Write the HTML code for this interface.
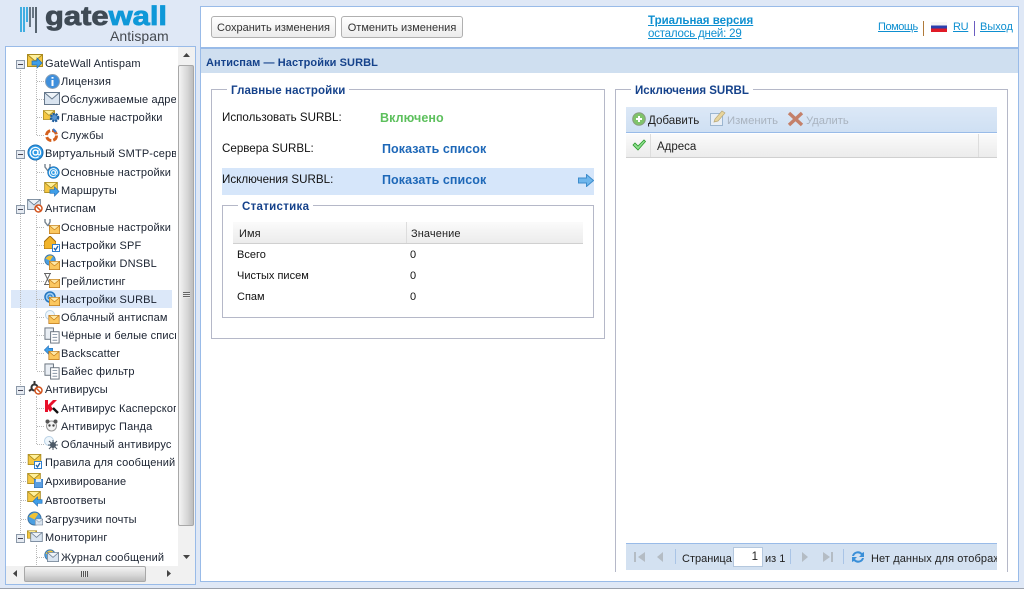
<!DOCTYPE html>
<html lang="ru"><head><meta charset="utf-8"><title>GateWall Antispam</title>
<style>
html,body{margin:0;padding:0}
body{width:1024px;height:589px;overflow:hidden;background:#dfe8f6;position:relative;font-family:"Liberation Sans",sans-serif;font-size:11px;color:#111}
div,span,a,svg{position:absolute;white-space:nowrap}
a{color:#0e8fd0;text-decoration:underline}
.t{line-height:14px;font-size:11px;letter-spacing:.15px;color:#1a2230}
.b{font-weight:bold}
.fs{border:1px solid #b5b8c8;box-sizing:border-box}
.lg{font-weight:bold;color:#15428b;background:#fff;padding:0 4px;font-size:11.5px;line-height:14px}
.btn{top:16px;height:22px;box-sizing:border-box;border:1px solid #b0b0b0;border-radius:3px;background:linear-gradient(#fff,#ececec);text-align:center;line-height:22px;font-size:11px;color:#333}
.h{background:linear-gradient(#fbfbfb,#f3f3f3 50%,#ececec);border-bottom:1px solid #d0d0d0;box-sizing:border-box}
.sep{width:1px;background:#a9c4e6}
</style></head><body>
<svg width="0" height="0" style="left:0;top:0"><defs>
<symbol id="env" viewBox="0 0 16 13"><rect x=".5" y=".5" width="15" height="12" fill="#fbc75f" stroke="#b9761a"/><path d="M1 1l7 6 7-6" fill="#ffe9a8" stroke="#c27a16"/></symbol>
<symbol id="gen" viewBox="0 0 16 13"><rect x=".5" y=".5" width="15" height="12" fill="#f5c742" stroke="#a88a20"/><path d="M1 1l7 6 7-6" fill="#fff09a" stroke="#a88a20"/></symbol>
<symbol id="genv" viewBox="0 0 16 13"><rect x=".5" y=".5" width="15" height="12" fill="#d9e4f0" stroke="#66788c"/><path d="M1 1l7 6 7-6" fill="#eef3f8" stroke="#66788c"/></symbol>
<symbol id="doc" viewBox="0 0 18 18"><rect x="1" y="1" width="9" height="12" fill="#e9eef4" stroke="#66707c"/><rect x="7" y="5" width="9" height="12" fill="#fff" stroke="#66707c"/><path d="M9 8h5M9 11h5M9 14h5" stroke="#8895a5"/></symbol>
<symbol id="ar" viewBox="0 0 12 12"><path d="M1 4h5V1l5 5-5 5V8H1z" fill="#3f9ee8" stroke="#1f6db8" stroke-width=".7"/></symbol>
<symbol id="al" viewBox="0 0 12 12"><path d="M11 4H6V1L1 6l5 5V8h5z" fill="#3f9ee8" stroke="#1f6db8" stroke-width=".7"/></symbol>
<symbol id="at" viewBox="0 0 18 18"><circle cx="9" cy="9" r="8" fill="#2f9be6" stroke="#1568b0"/><circle cx="9" cy="9" r="2.600" fill="none" stroke="#fff" stroke-width="1.500"/><path d="M11.600 6.400v3.600q0 2 2 1.400q1-1 .7-3a5.500 5.500 0 1 0-2 5" fill="none" stroke="#fff" stroke-width="1.300"/></symbol>
<symbol id="minus" viewBox="0 0 9 9"><rect x=".5" y=".5" width="8" height="8" fill="#e6ebf2" stroke="#8b98a8"/><path d="M2 4.500h5" stroke="#445"/></symbol>
<symbol id="globe" viewBox="0 0 16 16"><circle cx="8" cy="8" r="7" fill="#4b9ee0" stroke="#3a6f9e"/><path d="M2 6q5-6 10-3L8 9z" fill="#f1c232"/></symbol>
</defs></svg>

<!-- logo -->
<svg style="left:19px;top:6px" width="20" height="30"><g stroke-width="1.600"><path d="M2 1v25M5 1v25M8 1v15" stroke="#1aa0dc"/><path d="M11 1v20M14 1v11" stroke="#4b5a68"/><path d="M17 1v26" stroke="#35424f"/></g></svg>
<div class="b" style="left:45px;top:1px;font-size:27px;line-height:30px;color:#3f4a55;-webkit-text-stroke:.8px currentColor;transform-origin:0 0;transform:scaleX(1.145)">gate<span style="position:static;color:#0f98d8">wall</span></div>
<div style="left:110px;top:27px;font-size:14px;line-height:18px;color:#44494f;letter-spacing:.05px">Antispam</div>

<!-- left panel -->
<div style="left:5px;top:46px;width:191px;height:539px;box-sizing:border-box;background:#fff;border:1px solid #99bbe8"></div>
<div style="left:11px;top:290px;width:161px;height:18px;background:#dce8f9"></div>
<div style="left:20px;top:67px;height:470px;border-left:1px dotted #b8b8b8"></div>
<div style="left:36px;top:70px;height:65px;border-left:1px dotted #b8b8b8"></div>
<div style="left:36px;top:160px;height:30px;border-left:1px dotted #b8b8b8"></div>
<div style="left:36px;top:215px;height:155px;border-left:1px dotted #b8b8b8"></div>
<div style="left:36px;top:396px;height:48px;border-left:1px dotted #b8b8b8"></div>
<div style="left:36px;top:545px;height:20px;border-left:1px dotted #b8b8b8"></div>
<svg style="left:0;top:0" width="60" height="589"><path fill="none" stroke="#b8b8b8" stroke-dasharray="1 1" d="M37 81.500h7M37 99.500h7M37 117.500h7M37 135.500h7M37 172.500h7M37 190.500h7M37 227.500h7M37 245.500h7M37 263.500h7M37 281.500h7M37 299.500h7M37 317.500h7M37 335.500h7M37 353.500h7M37 371.500h7M37 408.500h7M37 426.500h7M37 444.500h7M37 557.500h7M21 462.500h6M21 481.500h6M21 500.500h6M21 519.500h6"/></svg>

<svg style="left:16px;top:60px" width="9" height="9"><use href="#minus"/></svg>
<svg style="left:16px;top:150px" width="9" height="9"><use href="#minus"/></svg>
<svg style="left:16px;top:205px" width="9" height="9"><use href="#minus"/></svg>
<svg style="left:16px;top:386px" width="9" height="9"><use href="#minus"/></svg>
<svg style="left:16px;top:534px" width="9" height="9"><use href="#minus"/></svg>

<!-- tree icons -->
<svg style="left:27px;top:54px" width="16" height="13"><use href="#gen"/></svg><svg style="left:31px;top:57px" width="12" height="12"><use href="#ar"/></svg>
<svg style="left:45px;top:74px" width="15" height="15" viewBox="0 0 15 15"><circle cx="7.500" cy="7.500" r="7" fill="#3f8fdc" stroke="#87a0b8"/><path d="M7.500 3v1.600M7.500 6v6" stroke="#fff" stroke-width="2"/></svg>
<svg style="left:44px;top:92px" width="16" height="13"><use href="#genv"/></svg>
<svg style="left:43px;top:110px" width="12" height="10"><use href="#gen"/></svg><svg style="left:49px;top:112px" width="11" height="11" viewBox="0 0 11 11"><circle cx="5.500" cy="5.500" r="3.600" fill="#5a98d4" stroke="#1f5c9c" stroke-width="2.400" stroke-dasharray="2 1"/></svg>
<svg style="left:44px;top:128px" width="15" height="15" viewBox="0 0 15 15"><circle cx="7.500" cy="7.500" r="5" fill="none" stroke="#d4601e" stroke-width="3" stroke-dasharray="6 2"/><path d="M9 1l3 3" stroke="#3a78c8" stroke-width="2"/></svg>
<svg style="left:27px;top:144px" width="17" height="17"><use href="#at"/></svg>
<svg style="left:44px;top:164px" width="8" height="10" viewBox="0 0 8 10"><path d="M1 0v3l3 4M6 0v3L4 7" stroke="#76838f" stroke-width="1.400" fill="none"/></svg><svg style="left:47px;top:166px" width="13" height="13"><use href="#at"/></svg>
<svg style="left:44px;top:182px" width="14" height="11"><use href="#gen"/></svg><svg style="left:49px;top:186px" width="11" height="11"><use href="#ar"/></svg>
<svg style="left:27px;top:199px" width="14" height="11"><use href="#genv"/></svg><svg style="left:34px;top:204px" width="9" height="9" viewBox="0 0 9 9"><circle cx="4.500" cy="4.500" r="3.500" fill="#fff" stroke="#d2531c" stroke-width="1.500"/><path d="M2 2l5 5" stroke="#d2531c" stroke-width="1.500"/></svg>
<svg style="left:44px;top:219px" width="8" height="10" viewBox="0 0 8 10"><path d="M1 0v3l3 4M6 0v3L4 7" stroke="#76838f" stroke-width="1.400" fill="none"/></svg><svg style="left:49px;top:225px" width="11" height="9"><use href="#env"/></svg>
<svg style="left:44px;top:236px" width="12" height="13" viewBox="0 0 12 13"><path d="M0 6l6-6 6 6v7H0z" fill="#f2b42a" stroke="#a06c10"/></svg><svg style="left:52px;top:244px" width="8" height="8" viewBox="0 0 8 8"><rect x=".5" y=".5" width="7" height="7" fill="#fff" stroke="#2f7fd0"/><path d="M2 4l1.500 2L6 2" stroke="#1f62ad" fill="none" stroke-width="1.300"/></svg>
<svg style="left:44px;top:254px" width="12" height="12"><use href="#globe"/></svg><svg style="left:49px;top:261px" width="11" height="9"><use href="#env"/></svg>
<svg style="left:44px;top:273px" width="7" height="12" viewBox="0 0 7 12"><path d="M0 .5h7M0 11.500h7M1 1l5 10M6 1L1 11" stroke="#666" fill="none"/></svg><svg style="left:49px;top:279px" width="11" height="9"><use href="#env"/></svg>
<svg style="left:44px;top:291px" width="12" height="12" viewBox="0 0 12 12"><circle cx="6" cy="6" r="5" fill="#9ccbf0" stroke="#2275c0" stroke-width="1.500"/><circle cx="6" cy="6" r="2" fill="none" stroke="#2275c0"/></svg><svg style="left:49px;top:297px" width="11" height="9"><use href="#env"/></svg>
<svg style="left:44px;top:310px" width="12" height="10" viewBox="0 0 12 10"><circle cx="6" cy="5" r="4.500" fill="#eef6fc" stroke="#b9d2e6"/></svg><svg style="left:48px;top:315px" width="12" height="9"><use href="#env"/></svg>
<svg style="left:44px;top:327px" width="17" height="17"><use href="#doc"/></svg>
<svg style="left:43px;top:345px" width="11" height="10"><use href="#al"/></svg><svg style="left:48px;top:351px" width="12" height="9"><use href="#env"/></svg>
<svg style="left:44px;top:363px" width="17" height="17"><use href="#doc"/></svg>
<svg style="left:28px;top:381px" width="13" height="13" viewBox="0 0 13 13"><circle cx="6.500" cy="6.500" r="3" fill="none" stroke="#333" stroke-width="2"/><path d="M6.500 0v4M1 10l3-2M12 10L9 8" stroke="#333" stroke-width="2"/></svg><svg style="left:34px;top:386px" width="9" height="9" viewBox="0 0 9 9"><circle cx="4.500" cy="4.500" r="3.500" fill="#fff" stroke="#d2531c" stroke-width="1.500"/><path d="M2 2l5 5" stroke="#d2531c" stroke-width="1.500"/></svg>
<svg style="left:45px;top:400px" width="14" height="14" viewBox="0 0 14 14"><path d="M0 0h3v5l5-5h4L6 6l2 3-3 3-2-3v3H0z" fill="#e8102a"/><path d="M8 8l5 5" stroke="#111" stroke-width="2.400"/></svg>
<svg style="left:45px;top:419px" width="13" height="13" viewBox="0 0 13 13"><circle cx="6.500" cy="7" r="5" fill="#f3f3f3" stroke="#999"/><circle cx="2.500" cy="2.500" r="2" fill="#555"/><circle cx="10.500" cy="2.500" r="2" fill="#555"/><circle cx="4.500" cy="6.500" r="1.200" fill="#444"/><circle cx="8.500" cy="6.500" r="1.200" fill="#444"/></svg>
<svg style="left:44px;top:436px" width="15" height="15" viewBox="0 0 15 15"><circle cx="5" cy="5" r="4.500" fill="#eef6fc" stroke="#b9d2e6"/><circle cx="9" cy="9" r="3" fill="#4c5966"/><path d="M4 9h10M9 4v10M5 5l8 8M13 5l-8 8" stroke="#4c5966"/></svg>
<svg style="left:27px;top:454px" width="15" height="11"><use href="#gen"/></svg><svg style="left:34px;top:461px" width="8" height="8" viewBox="0 0 8 8"><rect x=".5" y=".5" width="7" height="7" fill="#fff" stroke="#2f7fd0"/><path d="M2 4l1.500 2L6 2" stroke="#1f62ad" fill="none" stroke-width="1.300"/></svg>
<svg style="left:27px;top:473px" width="14" height="11"><use href="#gen"/></svg><svg style="left:34px;top:479px" width="9" height="9" viewBox="0 0 9 9"><rect width="9" height="9" fill="#5a9de0" stroke="#2a6ab0"/><rect x="2" y="0" width="5" height="3" fill="#dceaf8"/></svg>
<svg style="left:27px;top:491px" width="14" height="11"><use href="#gen"/></svg><svg style="left:32px;top:496px" width="11" height="11"><use href="#al"/></svg>
<svg style="left:27px;top:511px" width="15" height="15"><use href="#globe"/></svg><svg style="left:35px;top:518px" width="8" height="8"><use href="#genv"/></svg>
<svg style="left:27px;top:530px" width="10" height="9"><use href="#gen"/></svg><svg style="left:30px;top:532px" width="13" height="10"><use href="#genv"/></svg>
<svg style="left:44px;top:549px" width="12" height="12"><use href="#globe"/></svg><svg style="left:47px;top:552px" width="12" height="10"><use href="#genv"/></svg>

<!-- tree labels -->
<div style="left:0;top:48px;width:176px;height:518px;overflow:hidden">
<span class="t" style="left:45px;top:9px">GateWall Antispam</span>
<span class="t" style="left:61px;top:27px">Лицензия</span>
<span class="t" style="left:61px;top:45px">Обслуживаемые адреса</span>
<span class="t" style="left:61px;top:63px">Главные настройки</span>
<span class="t" style="left:61px;top:81px">Службы</span>
<span class="t" style="left:45px;top:99px">Виртуальный SMTP-сервер</span>
<span class="t" style="left:61px;top:118px">Основные настройки</span>
<span class="t" style="left:61px;top:136px">Маршруты</span>
<span class="t" style="left:45px;top:154px">Антиспам</span>
<span class="t" style="left:61px;top:173px">Основные настройки</span>
<span class="t" style="left:61px;top:191px">Настройки SPF</span>
<span class="t" style="left:61px;top:209px">Настройки DNSBL</span>
<span class="t" style="left:61px;top:227px">Грейлистинг</span>
<span class="t" style="left:61px;top:245px">Настройки SURBL</span>
<span class="t" style="left:61px;top:263px">Облачный антиспам</span>
<span class="t" style="left:61px;top:281px">Чёрные и белые списки</span>
<span class="t" style="left:61px;top:299px">Backscatter</span>
<span class="t" style="left:61px;top:317px">Байес фильтр</span>
<span class="t" style="left:45px;top:335px">Антивирусы</span>
<span class="t" style="left:61px;top:354px">Антивирус Касперского</span>
<span class="t" style="left:61px;top:372px">Антивирус Панда</span>
<span class="t" style="left:61px;top:390px">Облачный антивирус</span>
<span class="t" style="left:45px;top:408px">Правила для сообщений</span>
<span class="t" style="left:45px;top:427px">Архивирование</span>
<span class="t" style="left:45px;top:446px">Автоответы</span>
<span class="t" style="left:45px;top:465px">Загрузчики почты</span>
<span class="t" style="left:45px;top:483px">Мониторинг</span>
<span class="t" style="left:61px;top:503px">Журнал сообщений</span>
</div>

<!-- vertical scrollbar -->
<div style="left:178px;top:47px;width:17px;height:519px;background:#f1f1f1"></div>
<div style="left:178px;top:65px;width:16px;height:461px;box-sizing:border-box;border:1px solid #a8a8a8;border-radius:2px;background:linear-gradient(90deg,#f4f4f4,#d6d6d6 60%,#bdbdbd)"></div>
<div style="left:183px;top:292px;width:7px;height:6px;background:repeating-linear-gradient(#666 0,#666 1px,#e6e6e6 1px,#e6e6e6 2px)"></div>
<svg style="left:183px;top:52px" width="8" height="6"><path d="M0 5h7L3.500 1z" fill="#444"/></svg>
<svg style="left:183px;top:554px" width="8" height="6"><path d="M0 1h7L3.500 5z" fill="#444"/></svg>
<!-- horizontal scrollbar -->
<div style="left:6px;top:566px;width:172px;height:18px;background:#f1f1f1"></div>
<div style="left:24px;top:566px;width:122px;height:16px;box-sizing:border-box;border:1px solid #a8a8a8;border-radius:2px;background:linear-gradient(#f4f4f4,#d6d6d6 60%,#bdbdbd)"></div>
<div style="left:81px;top:571px;width:7px;height:6px;background:repeating-linear-gradient(90deg,#555 0,#555 1px,#e6e6e6 1px,#e6e6e6 2px)"></div>
<svg style="left:12px;top:570px" width="6" height="8"><path d="M5 0v7L1 3.500z" fill="#444"/></svg>
<svg style="left:166px;top:570px" width="6" height="8"><path d="M1 0v7l4-3.500z" fill="#444"/></svg>
<div style="left:178px;top:566px;width:17px;height:18px;background:#f1f1f1"></div>

<!-- right panel -->
<div style="left:200px;top:6px;width:819px;height:576px;box-sizing:border-box;background:#fff;border:1px solid #99bbe8"></div>
<div class="btn" style="left:211px;width:125px">Сохранить изменения</div>
<div class="btn" style="left:341px;width:122px">Отменить изменения</div>
<a class="b" style="left:648px;top:14px;font-size:11.500px;line-height:14px" href="#">Триальная версия</a>
<a style="left:648px;top:27px;font-size:11.500px;line-height:14px;letter-spacing:-.2px" href="#">осталось дней: 29</a>
<a style="left:878px;top:20px;line-height:14px;letter-spacing:-.45px" href="#">Помощь</a>
<div style="left:923px;top:21px;width:1px;height:15px;background:#b07a3a"></div>
<div style="left:931px;top:22px;width:16px;height:10px;background:linear-gradient(#f4f4f4 0 33%,#2a3fae 33% 66%,#e01a26 66%)"></div>
<a style="left:953px;top:20px;line-height:14px;letter-spacing:-.3px" href="#">RU</a>
<div style="left:974px;top:21px;width:1px;height:15px;background:#6a5cc0"></div>
<a style="left:980px;top:20px;line-height:14px" href="#">Выход</a>

<div style="left:201px;top:47px;width:817px;height:26px;box-sizing:border-box;background:#cfdff0;border-top:2px solid #99bbe8"></div>
<div class="b" style="left:206px;top:56px;font-size:11px;line-height:14px;color:#15428b;letter-spacing:.08px">Антиспам — Настройки SURBL</div>

<!-- main settings -->
<div class="fs" style="left:211px;top:89px;width:394px;height:250px"></div>
<div class="lg" style="left:227px;top:84px;letter-spacing:.12px">Главные настройки</div>
<div style="left:222px;top:168px;width:372px;height:27px;background:#d6e6fa"></div>
<div style="left:222px;top:110px;font-size:11.600px;line-height:15px;color:#111">Использовать SURBL:</div>
<div class="b" style="left:380px;top:111px;font-size:12.500px;line-height:15px;color:#5dc05d;letter-spacing:.1px">Включено</div>
<div style="left:222px;top:141px;font-size:11.600px;line-height:15px;color:#111">Сервера SURBL:</div>
<div class="b" style="left:382px;top:142px;font-size:12.500px;line-height:15px;color:#1e68b8;letter-spacing:.07px">Показать список</div>
<div style="left:222px;top:172px;font-size:11.600px;line-height:15px;color:#111">Исключения SURBL:</div>
<div class="b" style="left:382px;top:173px;font-size:12.500px;line-height:15px;color:#1e68b8;letter-spacing:.07px">Показать список</div>
<svg style="left:578px;top:174px" width="16" height="13" viewBox="0 0 16 13"><path d="M.5 4h8V.5L15.500 6.500l-7 6V9h-8z" fill="#6eb6ec" stroke="#3d8ccc"/></svg>

<!-- stats -->
<div class="fs" style="left:222px;top:205px;width:372px;height:113px"></div>
<div class="lg" style="left:238px;top:200px;letter-spacing:.3px">Статистика</div>
<div class="h" style="left:233px;top:222px;width:350px;height:22px"></div>
<div style="left:406px;top:222px;width:1px;height:21px;background:#ddd"></div>
<div style="left:239px;top:227px;line-height:14px;font-size:11px;color:#222;letter-spacing:.1px">Имя</div>
<div style="left:411px;top:227px;line-height:14px;font-size:11px;color:#222;letter-spacing:.1px">Значение</div>
<div style="left:237px;top:248px;line-height:14px;color:#111">Всего</div><div style="left:410px;top:248px;line-height:14px;color:#111">0</div>
<div style="left:237px;top:269px;line-height:14px;color:#111">Чистых писем</div><div style="left:410px;top:269px;line-height:14px;color:#111">0</div>
<div style="left:237px;top:290px;line-height:14px;color:#111">Спам</div><div style="left:410px;top:290px;line-height:14px;color:#111">0</div>

<!-- exclusions -->
<div class="fs" style="left:615px;top:89px;width:393px;height:483px;border-bottom:0"></div>
<div class="lg" style="left:631px;top:84px">Исключения SURBL</div>
<div style="left:626px;top:107px;width:371px;height:26px;box-sizing:border-box;background:linear-gradient(#dce8f7,#cfe0f3);border-bottom:1px solid #99bbe8"></div>
<svg style="left:632px;top:112px" width="14" height="14" viewBox="0 0 14 14"><circle cx="7" cy="7" r="6.300" fill="#7fc46a" stroke="#8a9a80"/><path d="M7 4v6M4 7h6" stroke="#fff" stroke-width="2"/></svg>
<div style="left:648px;top:114px;line-height:14px;font-size:11.600px;color:#222">Добавить</div>
<svg style="left:710px;top:110px" width="16" height="17" viewBox="0 0 16 17"><rect x=".5" y="3.500" width="12" height="12" fill="#e8eef5" stroke="#9cb6d0"/><path d="M4 12l1-3 7-8 3 2-7 8z" fill="#e8d59c" stroke="#b8a878" stroke-width=".7"/></svg>
<div style="left:727px;top:114px;line-height:14px;font-size:11.300px;color:#a9b3bf">Изменить</div>
<svg style="left:787px;top:111px" width="17" height="16" viewBox="0 0 17 16"><path d="M2 2l13 12M15 2L2 14" stroke="#c4806a" stroke-width="3.400"/></svg>
<div style="left:806px;top:114px;line-height:14px;font-size:11.200px;color:#a9b3bf">Удалить</div>
<div class="h" style="left:626px;top:134px;width:371px;height:24px"></div>
<div style="left:650px;top:134px;width:1px;height:23px;background:#ddd"></div>
<div style="left:978px;top:134px;width:1px;height:23px;background:#ddd"></div>
<svg style="left:632px;top:139px" width="14" height="12" viewBox="0 0 14 12"><path d="M1 6l2-2 3 3 6-6 1.500 1.500L6 11z" fill="#8fe08f" stroke="#2c9a2c" stroke-width=".8"/></svg>
<div style="left:657px;top:140px;line-height:14px;font-size:11.500px;color:#222">Адреса</div>

<!-- paging -->
<div style="left:626px;top:543px;width:371px;height:27px;box-sizing:border-box;background:#d3e1f1;border-top:1px solid #99bbe8"></div>
<svg style="left:633px;top:551px" width="14" height="12" viewBox="0 0 14 12"><rect x="1" y="1" width="2" height="10" fill="#b4bcc4"/><path d="M12 1v10L5 6z" fill="#b4bcc4"/></svg>
<svg style="left:655px;top:551px" width="10" height="12" viewBox="0 0 10 12"><path d="M8 1v10L2 6z" fill="#b4bcc4"/></svg>
<div class="sep" style="left:675px;top:549px;height:15px"></div>
<div style="left:682px;top:552px;line-height:14px;font-size:11px;color:#222">Страница</div>
<div style="left:733px;top:547px;width:30px;height:20px;box-sizing:border-box;background:#fff;border:1px solid #b5c8de;text-align:right;padding-right:4px;line-height:18px;font-size:11.500px;color:#222">1</div>
<div style="left:765px;top:552px;line-height:14px;font-size:11px;color:#222">из 1</div>
<div class="sep" style="left:790px;top:549px;height:15px"></div>
<svg style="left:800px;top:551px" width="10" height="12" viewBox="0 0 10 12"><path d="M2 1v10l6-5z" fill="#b4bcc4"/></svg>
<svg style="left:821px;top:551px" width="14" height="12" viewBox="0 0 14 12"><path d="M2 1v10l7-5z" fill="#b4bcc4"/><rect x="10" y="1" width="2" height="10" fill="#b4bcc4"/></svg>
<div class="sep" style="left:843px;top:549px;height:15px"></div>
<svg style="left:850px;top:549px" width="16" height="16" viewBox="0 0 16 16"><path d="M2 7a6 6 0 0 1 10-3l2-1v5H9l2-2a4 4 0 0 0-7 1z" fill="#3a8fd8"/><path d="M14 9a6 6 0 0 1-10 3l-2 1V8h5l-2 2a4 4 0 0 0 7-1z" fill="#3a8fd8"/></svg>
<div style="left:871px;top:552px;width:126px;height:14px;overflow:hidden"><span style="left:0;top:0;line-height:14px;font-size:11px;color:#222;letter-spacing:.1px">Нет данных для отображения</span></div>

<div style="left:0;top:588px;width:1024px;height:1px;background:#9aa0ab"></div>
</body></html>
